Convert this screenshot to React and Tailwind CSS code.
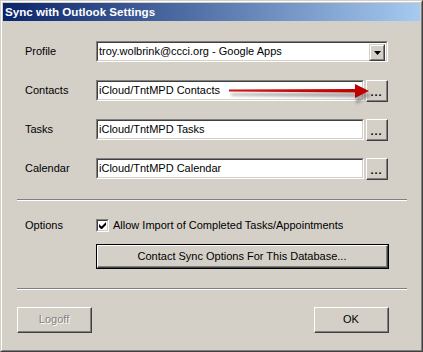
import React from 'react';

const font = { fontFamily: '"Liberation Sans", Arial, sans-serif' };

// sunken edit box
const Field = ({ children, className = '' }) => (
  <div className={`border-t border-l border-[#808080] border-r border-b border-r-white border-b-white ${className}`}>
    <div className="h-full border-t border-l border-[#404040] border-r border-b border-r-[#d4d0c8] border-b-[#d4d0c8] bg-white flex items-center pl-[1px] text-[11px] text-black whitespace-nowrap overflow-hidden">
      {children}
    </div>
  </div>
);

// raised push button
const Button = ({ children, className = '', disabled = false }) => (
  <div className={`border-t border-l border-white border-r border-b border-r-[#404040] border-b-[#404040] bg-[#d4d0c8] ${className}`}>
    <div className="h-full border-r border-b border-[#808080] flex items-center justify-center text-[11px]">
      {disabled ? (
        <span className="text-[#808080] [text-shadow:1px_1px_0_#ffffff]">{children}</span>
      ) : (
        <span className="text-black">{children}</span>
      )}
    </div>
  </div>
);

const Separator = () => (
  <div className="mx-[14px] mr-[13px] border-t border-[#808080] border-b border-b-white" />
);

const Row = ({ label, children, className = '' }) => (
  <div className={`flex items-center h-[21px] ${className}`}>
    <div className="w-[93px] pl-[22px] text-[11px] text-black">{label}</div>
    {children}
  </div>
);

const Browse = () => (
  <Button className="w-[22px] h-[22px] ml-[2px] self-start">
    <span className="relative top-[2px] tracking-[1px] font-bold">...</span>
  </Button>
);

export default function App() {
  return (
    <div style={font} className="relative w-[423px] h-[352px] border-t border-l border-[#d4d0c8] border-r border-b border-r-[#404040] border-b-[#404040] select-none">
      <div className="h-full border-t border-l border-white border-r border-b border-r-[#808080] border-b-[#808080]">
        <div className="h-full bg-[#d4d0c8] p-[1px] flex flex-col">
          {/* title bar */}
          <div className="h-[18px] bg-[linear-gradient(to_right,#0a246a,#a6caf0)] flex items-center pl-[2px]">
            <span className="text-white font-bold text-[11.6px] leading-none">Sync with Outlook Settings</span>
          </div>

          {/* body */}
          <div className="flex flex-col">
            <Row label="Profile" className="mt-[20px]">
              <Field className="w-[292px] h-[21px] relative">
                <span>troy.wolbrink@ccci.org - Google Apps</span>
                <div className="absolute right-[2px] top-[2px] w-[16px] h-[17px] border-t border-l border-[#d4d0c8] border-r border-b border-r-[#404040] border-b-[#404040] bg-[#d4d0c8]">
                  <div className="h-full border-t border-l border-white border-r border-b border-r-[#808080] border-b-[#808080] flex items-center justify-center">
                    <svg width="7" height="4" viewBox="0 0 7 4"><path d="M0 0h7L3.5 4z" fill="#000" /></svg>
                  </div>
                </div>
              </Field>
            </Row>

            <Row label="Contacts" className="mt-[18px]">
              <Field className="w-[268px] h-[21px]">iCloud/TntMPD Contacts</Field>
              <Browse />
            </Row>

            <Row label="Tasks" className="mt-[18px]">
              <Field className="w-[268px] h-[21px]">iCloud/TntMPD Tasks</Field>
              <Browse />
            </Row>

            <Row label="Calendar" className="mt-[18px]">
              <Field className="w-[268px] h-[21px]">iCloud/TntMPD Calendar</Field>
              <Browse />
            </Row>

            <div className="mt-[20px]">
              <Separator />
            </div>

            <div className="flex items-center mt-[18px] h-[13px]">
              <div className="w-[93px] pl-[22px] text-[11px] text-black">Options</div>
              <div className="w-[13px] h-[13px] border-t border-l border-[#808080] border-r border-b border-r-white border-b-white">
                <div className="h-full border-t border-l border-[#404040] border-r border-b border-r-[#d4d0c8] border-b-[#d4d0c8] bg-white flex items-center justify-center">
                  <svg width="7" height="7" viewBox="0 0 7 7">
                    <path d="M0 2v3l2 2h1l4-4V0L2.5 4.5z" fill="#000" />
                  </svg>
                </div>
              </div>
              <span className="ml-[4px] text-[11px] text-black whitespace-nowrap">Allow Import of Completed Tasks/Appointments</span>
            </div>

            <div className="flex mt-[12px]">
              <div className="ml-[93px] w-[293px] h-[25px] border border-black">
                <Button className="h-full">Contact Sync Options For This Database...</Button>
              </div>
            </div>

            <div className="mt-[19px]">
              <Separator />
            </div>

            <div className="flex justify-between mt-[17px] ml-[14px] mr-[31px]">
              <Button className="w-[75px] h-[26px]" disabled>Logoff</Button>
              <Button className="w-[75px] h-[26px]">OK</Button>
            </div>
          </div>
        </div>
      </div>

      {/* red pointer arrow drawn over the dialog */}
      <svg className="absolute left-[222px] top-[78px] pointer-events-none" width="152" height="28" viewBox="0 0 152 28">
        <defs>
          <filter id="blur" x="-10%" y="-100%" width="120%" height="300%">
            <feGaussianBlur stdDeviation="1.6" />
          </filter>
          <linearGradient id="red" x1="0" x2="1" y1="0" y2="0">
            <stop offset="0" stopColor="#d01818" />
            <stop offset="1" stopColor="#c00000" />
          </linearGradient>
        </defs>
        <g filter="url(#blur)" opacity="0.55">
          <path d="M8 14.5L134 13.5v5L8 16.5z" fill="#606060" />
          <path d="M133 8l15 8.5-15 8.5z" fill="#606060" />
        </g>
        <path d="M6 10.6L134 10v3.6L6 12.6z" fill="url(#red)" />
        <path d="M132 5l14 7-14 7z" fill="#c00000" />
      </svg>
    </div>
  );
}
